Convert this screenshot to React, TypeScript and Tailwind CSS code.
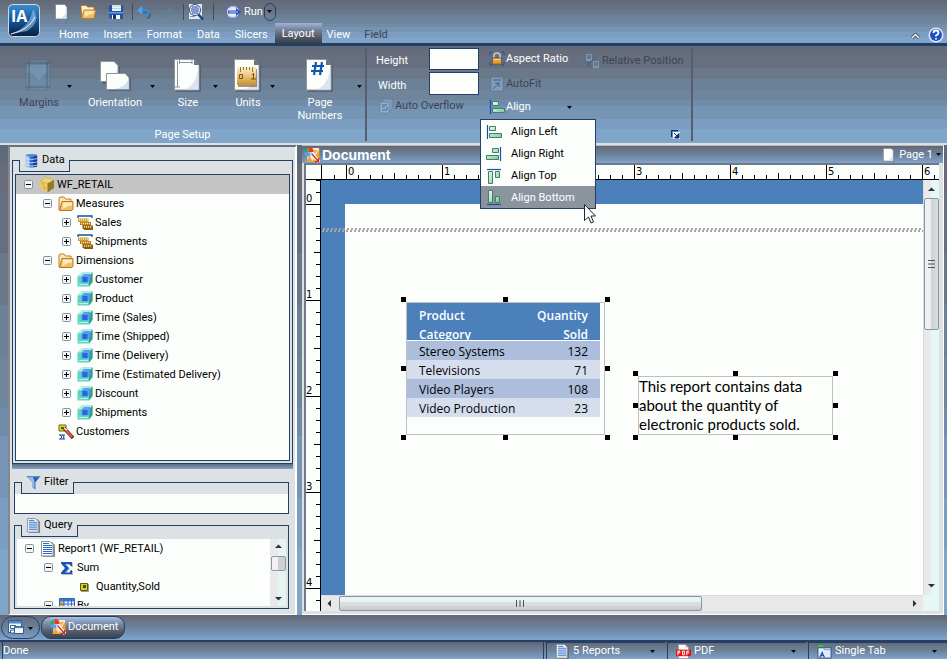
import type { ReactNode } from "react";

const BANDS =
  "bg-[linear-gradient(to_bottom,#5f6a7a_0_4%,#676b7a_4%_10%,#666f80_10%_23%,#6a788a_23%_34%,#6b8197_34%_45%,#6e859b_45%_56%,#718bab_56%_62%,#7694b3_62%_75%,#7a9dc1_75%_86%,#80a5c9_86%)]";
const SLIM = "bg-[linear-gradient(to_bottom,#5f6676,#6a7384_20%,#6b8299_50%,#7492b5_75%,#80a5c9)]";

type IconProps = { name: string; size?: number; className?: string };

const Sheet = ({ fold = true }: { fold?: boolean }) => (
  <g>
    <path d="M3 1h8l3 3v12H3z" fill="#555b66" opacity=".55" />
    <path d="M1.500 0.500h9l2.500 2.500v12H1.500z" fill="#fdfefd" stroke="#8b9199" />
    {fold && <path d="M12.500 5v9.500H6q6-2 6.500-9.500z" fill="#cfe0f4" />}
  </g>
);

const Bars = () => (
  <linearGradient id="mint" x1="0" y1="0" x2="1" y2="1">
    <stop offset="0" stopColor="#e4fbe6" />
    <stop offset="1" stopColor="#7fca98" />
  </linearGradient>
);

const glyphs: Record<string, ReactNode> = {
  page: <Sheet />,
  open: (
    <g stroke="#b5741c" strokeWidth=".8">
      <path d="M1 2.500q0-1 1-1h4l1.500 1.500H14v10H2z" fill="#fff0c8" />
      <path d="M1.500 14.500 4 6h12l-2 8.500z" fill="#f3bb5f" />
      <path d="M4.500 7h9.500l-1 3q-4 0-8 3z" fill="#fde3a6" stroke="none" />
    </g>
  ),
  folder: (
    <g stroke="#b4701d" strokeWidth=".9">
      <path d="M1 14V2l1-1h4l1.500 2H13v11z" fill="#fce5b4" />
      <path d="M1.500 14.500 4 5.500h11V13l-1 1.500z" fill="#f2bd68" />
      <path d="M5 6.500h9v3q-5 0-9.500 4z" fill="#fdeab9" stroke="none" />
    </g>
  ),
  save: (
    <g>
      <path d="M1 1h14v14H3l-2-2z" fill="#2454a8" />
      <path d="M4 1h9v6H4z" fill="#eaf3fd" />
      <path d="M4 2h9M4 4.500h9" stroke="#bcd2ee" />
      <path d="M1 8h14v1.500H1z" fill="#5ea0e6" />
      <path d="M4 11h8v4H4z" fill="#f5f7f9" />
      <path d="M5 11h3v4H5z" fill="#16336b" />
    </g>
  ),
  undo: (
    <g fill="none">
      <path d="M6 6.500h4q4 0 3 6l-2 2" stroke="#33425c" strokeWidth="2.500" transform="translate(1 1)" opacity=".6" />
      <path d="M5 6h5q4 0 3 4.500-.5 2-3 3" stroke="#2f8fdc" strokeWidth="2.600" />
      <path d="M0 6 6 1v10z" fill="#4aa6ea" />
    </g>
  ),
  redo: (
    <g fill="none" opacity=".75">
      <path d="M10 6.500H6Q2 6.500 3 11q.5 2 3 3" stroke="#5c8794" strokeWidth="2.400" />
      <path d="m15.500 6.500-6-5v10z" fill="#5c8794" />
    </g>
  ),
  preview: (
    <g>
      <path d="M1 0h13v15H1z" fill="#dfe7f0" />
      <path d="m10 10 5 5.500" stroke="#1d3f8f" strokeWidth="2.500" />
      <circle cx="7" cy="6" r="5.500" fill="#eef6ff" stroke="#31507c" />
      <path d="M4 3h6M3 5h8M3 7h8M4 9h6" stroke="#1b3f9f" />
      <path d="M2 12.500h5" stroke="#8293ac" />
    </g>
  ),
  run: (
    <g>
      <circle cx="7" cy="8" r="6.500" fill="#e5ecfa" stroke="#566fae" />
      <path d="M3 4q4-3 7.500 0M2 12q5 3 8.500 0" stroke="#9db3e2" strokeWidth="1.200" fill="none" />
      <path d="M2 6.500h8V4l5 4-5 4V9.500H2z" fill="#2b4fc0" />
      <path d="M3 8h9" stroke="#c6d6ff" />
    </g>
  ),
  help: (
    <g>
      <circle cx="8" cy="8" r="7.500" fill="#d9e6fb" />
      <circle cx="8" cy="8" r="6" fill="#1d50c4" />
      <path d="M5.500 6q0-2.500 2.500-2.500T10.500 6Q10.500 7.200 8 8.500v1M8 11v1.500" stroke="#fff" strokeWidth="1.800" fill="none" />
    </g>
  ),
  lock: (
    <g>
      <path d="M1 4V1h3M12 1h3v3M15 11v3h-3M4 14H1v-3" stroke="#1a50b0" fill="none" />
      <path d="M5 7V4.500q0-2.500 3-2.500t3 2.500V7" stroke="#c3c7cd" strokeWidth="1.600" fill="none" />
      <path d="M3.500 7h9v6h-9z" fill="#e59f34" stroke="#6b4a1c" strokeWidth=".7" />
      <path d="M4.500 8.500h7" stroke="#fbd98d" />
    </g>
  ),
  fit: (
    <g opacity=".6">
      <path d="M2 1h12v14H2z" fill="#90b0d2" stroke="#4a6f99" strokeWidth=".7" />
      <path d="M4 4h8M4 13l6-6M6 7h4v4" stroke="#1d427a" fill="none" />
    </g>
  ),
  overflow: (
    <g opacity=".6">
      <path d="M5 1h9v11H5z" fill="#8cabcc" stroke="#57789c" strokeWidth=".7" />
      <path d="M2 4h9v11H2z" fill="#a9c2dc" stroke="#57789c" strokeWidth=".7" />
      <path d="M4 7h5M4 9h3M4 12h5M9 9v3" stroke="#2b4d80" fill="none" />
    </g>
  ),
  relative: (
    <g opacity=".6">
      <path d="M1 1h6v7H1zM8 8h6v7H8z" fill="#8fb0d3" />
      <path d="M2 3h4M2 5h4M9 10h4M9 12h4M3 12l8-9M3 9v4h3" stroke="#33557f" fill="none" />
    </g>
  ),
  alignLeft: (
    <g>
      <Bars />
      <path d="M1.500 1v14" stroke="#0b51b5" strokeWidth="1.200" />
      <path d="M3.500 2.500h6v4h-6zM3.500 9.500h12v4h-12z" fill="url(#mint)" stroke="#3f8069" />
    </g>
  ),
  alignRight: (
    <g>
      <path d="M14.500 1v14" stroke="#0b51b5" strokeWidth="1.200" />
      <path d="M6.500 2.500h6v4h-6zM.5 9.500h12v4H.5z" fill="url(#mint)" stroke="#3f8069" />
    </g>
  ),
  alignTop: (
    <g>
      <path d="M1 1.500h14" stroke="#0b51b5" strokeWidth="1.200" />
      <path d="M2.500 3.500h4v12h-4zM9.500 3.500h4v6h-4z" fill="url(#mint)" stroke="#3f8069" />
    </g>
  ),
  alignBottom: (
    <g>
      <path d="M1 14.500h14" stroke="#0b51b5" strokeWidth="1.200" />
      <path d="M2.500.5h4v12h-4zM9.500 6.500h4v6h-4z" fill="url(#mint)" stroke="#3f8069" />
    </g>
  ),
  database: (
    <g>
      <path d="M2 2.500h12v12q-6 2-12 0z" fill="#2e6ad0" />
      <path d="M2 2.500h4v12.500l-4-.5z" fill="#a9cbf6" />
      <path d="M10 3h4v11.500l-4 .8z" fill="#12358c" />
      <path d="M2 6q6 2 12 0M2 9.500q6 2 12 0M2 13q6 2 12 0" stroke="#cfe2fb" strokeWidth=".9" fill="none" />
      <ellipse cx="8" cy="2.500" rx="6" ry="1.500" fill="#4f88df" />
    </g>
  ),
  box: (
    <g>
      <path d="m1 4 6-3.500L15 3v8l-6.500 4.500L1 12z" fill="#f1c465" />
      <path d="m1 4 6-3.500L15 3 8.500 6.500z" fill="#ecd66d" stroke="#c2a84c" strokeWidth=".5" />
      <path d="M8.500 6.500 15 3v8l-6.500 4.500z" fill="#8e7b2d" />
      <path d="M4 5v3M5.500 9.500v3" stroke="#c69a45" />
    </g>
  ),
  measure: (
    <g>
      <path d="M1 3V1h14v2" stroke="#0d55a5" strokeWidth="1.300" fill="none" />
      <path d="M1 3.500h10.500v4.500H3v-1H1z" fill="#d39a33" />
      <path d="M3 7h11v4H5.500v-1H3z" fill="#b57819" />
      <path d="M5.500 10.500H16v4.500H7v-1H5.500z" fill="#8c5a15" />
      <path d="M2 5h9M4 8.500h9M7 12h8" stroke="#fbe3a0" strokeWidth="1.400" strokeDasharray="1.200 .8" />
    </g>
  ),
  cube: (
    <g>
      <path d="M.5 4.500 5 .5h10.500V10L12 14.500H.5z" fill="#5fd3c4" />
      <path d="M.5 4.500 5 .5h10.500L12 4.500z" fill="#a6f0e6" />
      <path d="M12 4.500 15.500.5V10L12 14.500z" fill="#2f9e93" />
      <path d="M4.500 4.500 7 2h6v6l-2.500 2.500h-6z" fill="#5c9cf0" />
      <path d="M5.500 5h5v5h-5z" fill="#2269d6" />
      <path d="M2 12.500h9" stroke="#b9f4ec" />
    </g>
  ),
  wizard: (
    <g>
      <path d="M1 1h7v6H1z" fill="#e5dc1e" stroke="#6e6a12" />
      <path d="M3 3h3v2H3z" fill="#55520f" />
      <path d="m6 4 9 10" stroke="#5a2a22" strokeWidth="3.400" />
      <path d="m7 5 7 8" stroke="#e85b44" strokeWidth="2" />
      <path d="m6 4 3 2" stroke="#fff" strokeWidth="1.500" />
      <path d="M1 11h6M1 15h6M2 11l2 2-2 2M5 11l1 2-1 2" stroke="#1b3fa3" fill="none" />
    </g>
  ),
  filter: (
    <g>
      <path d="M.5 1h15L10 8v7.500L7 13V8z" fill="#2d5fb4" />
      <path d="M1 1h6L9 7v7l-2-1.500V8z" fill="#9dbdea" />
      <path d="M.5 1h15l-1.500 1.500H2z" fill="#5e88cc" />
    </g>
  ),
  report: (
    <g>
      <path d="M3 1h9l3 3v12H3z" fill="#59606c" opacity=".7" />
      <path d="M1.500.5H10L13 3.500V15H1.500z" fill="#fbfdff" stroke="#8a929c" />
      <path d="M3 2.500h6M3 4.500h9M3 6.500h9M3 8.500h9M3 10.500h9M3 12.500h9" stroke="#2a6cc9" />
    </g>
  ),
  sigma: (
    <g>
      <path d="M3 3h11v4h-1.500l-1-2H7l4 4-4 4.500h4.500l1.500-2.500H14V15H3v-1.500L7 9 3 4.500z" fill="#6d7f99" opacity=".5" />
      <path d="M2 2h11v4h-1.500l-1-2H6l4 4-4 4.500h4.500l1.500-2.500H13V14H2v-1.500L6 8 2 3.500z" fill="#1555b8" />
    </g>
  ),
  field: (
    <g>
      <path d="M2.500 4.500h7v7h-7z" fill="#d8cf22" stroke="#5f5a16" />
      <path d="M5 6h3v3H5z" fill="#4c4a18" />
      <path d="M10.500 5v7.500H3" stroke="#9a9a90" fill="none" />
    </g>
  ),
  by: (
    <g>
      <path d="M.5.5h15v14H.5z" fill="#eef4fd" stroke="#2a62b8" />
      <path d="M1 1h4v13H1z" fill="#f0b13c" />
      <path d="M1 1h14v2.500H1z" fill="#3f7fd6" />
      <path d="M5 1v13M9 1v13M12.500 1v13M1 6h14M1 9h14M1 12h14" stroke="#2a62b8" strokeWidth=".9" />
    </g>
  ),
  chart: (
    <g>
      <path d="M4 1h11v14H3z" fill="#f6ead2" />
      <path d="M15.500 2v13H8z" fill="#ee9f33" />
      <path d="M9 3h5l-3 4z" fill="#f3b04a" />
      <path d="M0 5.500A4.500 4.500 0 0 1 4.500 1v4.500z" fill="#32a86a" />
      <path d="M4.500 0A4.500 4.500 0 0 1 9.500 5h-5z" fill="#e23a2c" />
      <path d="M0 5.500h9a4.500 4 0 0 1-9 0z" fill="#5f9be8" />
      <path d="m2 15 3.500-6L9 15z" fill="#f0a336" />
      <path d="m7 6 8 9" stroke="#fff" strokeWidth="3.400" />
      <path d="m7.500 6.500 7 8M14.500 11v3.500H11" stroke="#cf2a1e" strokeWidth="1.300" fill="none" />
    </g>
  ),
  windows: (
    <g strokeWidth=".9">
      <path d="M.5.5h13v12H.5z" fill="#eef3f8" stroke="#27508a" />
      <path d="M1 1h12.500v2.500H1z" fill="#4f87cc" />
      <path d="M2.500 5.500h5v3h-5zM2.500 10h4v3h-4z" fill="#fff" stroke="#27508a" />
      <path d="M6.500 6.500h9v7h-9z" fill="#f8fafc" stroke="#27508a" />
      <path d="M7 7.500h8" stroke="#4f87cc" strokeWidth="1.400" />
    </g>
  ),
  pdf: (
    <g>
      <path d="M2.500.5H10L13.500 4v11.500h-11z" fill="#fafafa" stroke="#989898" />
      <path d="M10 .5V4h3.500z" fill="#c9c9c9" />
      <path d="M0 6h16v7H0z" fill="#e01616" />
      <path d="M2 12V7.500h2v2H2M7 7.500h2v4H7zM11.500 12V7.500h2.500M11.500 9.500H14" stroke="#fff" fill="none" />
    </g>
  ),
  tab: (
    <g>
      <path d="M1 1h6v3H1z" fill="#37c43c" />
      <path d="M1 4h14v11H1z" fill="#e3ecf6" stroke="#2c4f85" />
      <path d="M7.500 4v2H15" stroke="#7f98bb" fill="none" />
      <path d="M3 14.500 5.500 9 8 14.500M4 12.500h3" stroke="#1d50b8" strokeWidth="1.300" fill="none" />
    </g>
  ),
};

const Icon = ({ name, size = 16, className = "" }: IconProps) => (
  <svg width={size} height={size} viewBox="0 0 16 16" className={`shrink-0 ${className}`} aria-hidden="true">
    {glyphs[name]}
  </svg>
);

const Caret = ({ className = "" }: { className?: string }) => (
  <svg width="5" height="3" viewBox="0 0 5 3" className={`shrink-0 ${className}`} aria-hidden="true">
    <path d="M0 0h5L2.500 3z" fill="#05080d" />
  </svg>
);

const BigSheet = ({ children }: { children?: ReactNode }) => (
  <g>
    <path d="M4 2h20l5 5v26H4z" fill="#4a505c" opacity=".6" />
    <path d="M2.500.5H22L27 6v25H2.500z" fill="#fcfefc" stroke="#8e959d" />
    <path d="M22 .5V6h5z" fill="#6c7178" />
    <path d="M26.500 8v22.500H12Q24 27 26.500 8z" fill="#cfdff3" opacity=".8" />
    {children}
  </g>
);

const bigGlyphs: Record<string, ReactNode> = {
  Margins: (
    <g opacity=".45">
      <path d="M3 1h20l4 4v26H3z" fill="#6f97b8" stroke="#4f6f8c" />
      <path d="M4 6h20v8q-6 2-8 8l-6-8H4z" fill="#7fb4e0" />
      <path d="M6 1v30M3 4h24M3 28h24M24 3v27" stroke="#33445a" fill="none" />
    </g>
  ),
  Orientation: (
    <g>
      <path d="M3 4h14l4 4v17H3z" fill="#4a505c" opacity=".6" />
      <path d="M1.500 2.500H15l4 4V22.500H1.500z" fill="#fcfefc" stroke="#8e959d" />
      <path d="M18.500 8v14H9q8-4 9.500-14z" fill="#cfdff3" />
      <path d="M9 16h20l3 3v13H9z" fill="#4a505c" opacity=".6" />
      <path d="M7.500 14.500H26l4 4V30.500H7.500z" fill="#fcfefc" stroke="#8e959d" />
      <path d="M29.500 20v10H15q12-2 14.500-10z" fill="#cfdff3" />
    </g>
  ),
  Size: (
    <BigSheet>
      <path d="M5.500 2v26M3 28h5M7 3.500h13M7.500 1v4M20 1v4" stroke="#8d939b" fill="none" />
    </BigSheet>
  ),
  Units: (
    <BigSheet>
      <linearGradient id="brass" x1="0" y1="0" x2="0" y2="1">
        <stop offset="0" stopColor="#fbf0d3" />
        <stop offset=".45" stopColor="#ecca84" />
        <stop offset="1" stopColor="#c98f2c" />
      </linearGradient>
      <path d="M6 10h19v18H6z" fill="#6b5120" opacity=".6" />
      <path d="M5 8h19v18H5z" fill="url(#brass)" />
      <path d="M8.500 8v5M11.500 8v3M14.500 8v3M17.500 8v3M20.500 8v5" stroke="#a07a35" />
      <path d="M7.500 15.500h3v4h-3zM21.500 14v6M19 20h5M20 15.500h2" stroke="#7d4f14" fill="none" />
    </BigSheet>
  ),
  Numbers: (
    <BigSheet>
      <path d="M12 3 10 16M18 3l-2 13M8 7h12M7 12h12" stroke="#1157b0" strokeWidth="2.200" fill="none" />
    </BigSheet>
  ),
};

function BigButton({ icon, label, col, dim = false }: { icon: string; label: string; col: string; dim?: boolean }) {
  return (
    <button className={`flex items-start gap-[2px] ${dim ? "text-[#3d4450]" : ""}`} disabled={dim}>
      <span className={`flex flex-col items-center gap-1 whitespace-pre-line leading-[13px] ${col}`}>
        <svg width="32" height="33" viewBox="0 0 32 33" aria-hidden="true">
          {bigGlyphs[icon]}
        </svg>
        {label}
      </span>
      <Caret className="mt-[26px]" />
    </button>
  );
}

function ToolButton({ icon, label, dim = false }: { icon: string; label: string; dim?: boolean }) {
  return (
    <button className={`flex h-4 items-center gap-px whitespace-nowrap ${dim ? "text-[#3d4450]" : ""}`} disabled={dim}>
      <Icon name={icon} />
      {label}
    </button>
  );
}

const menuItems = [
  { icon: "alignLeft", label: "Align Left" },
  { icon: "alignRight", label: "Align Right" },
  { icon: "alignTop", label: "Align Top" },
  { icon: "alignBottom", label: "Align Bottom" },
];

function Header() {
  const tabs = ["Home", "Insert", "Format", "Data", "Slicers", "Layout", "View", "Field"];
  return (
    <header className={`flex h-[46px] shrink-0 border-b-[3px] border-[#243f66] ${BANDS}`}>
      <button aria-label="Application menu" className="ml-2 mt-1 h-8 w-8">
        <svg width="32" height="33" viewBox="0 0 32 33" aria-hidden="true">
          <defs>
            <linearGradient id="app" x1="0" y1="0" x2="0" y2="1">
              <stop offset="0" stopColor="#3c8fd0" />
              <stop offset=".5" stopColor="#14579b" />
              <stop offset="1" stopColor="#0a1d3c" />
            </linearGradient>
          </defs>
          <rect x=".5" y=".5" width="31" height="32" rx="4" fill="url(#app)" stroke="#c9d8e6" />
          <path d="M2 30Q22 24 25 5q9 12-6 22z" fill="#9fc2e2" opacity=".6" />
          <path d="M3 30q18-4 24-17" stroke="#e6f0f9" fill="none" />
          <text x="3" y="18" fontSize="16" fontWeight="700" fill="#fff" fontFamily="Open Sans, sans-serif">IA</text>
        </svg>
      </button>
      <div className="ml-[9px] flex flex-1 flex-col">
        <div className="flex h-6 items-center pl-[5px]">
          <button aria-label="New"><Icon name="page" /></button>
          <button aria-label="Open" className="ml-[10px]"><Icon name="open" /></button>
          <button aria-label="Save" className="ml-[12px]"><Icon name="save" /></button>
          <span className="ml-2 h-4 w-px bg-[#444b5a]" />
          <button aria-label="Undo" className="ml-1"><Icon name="undo" size={14} /></button>
          <button aria-label="Redo" className="ml-[9px]"><Icon name="redo" size={14} /></button>
          <span className="ml-[9px] h-4 w-px bg-[#444b5a]" />
          <button aria-label="Preview" className="ml-1"><Icon name="preview" /></button>
          <span className="ml-[9px] h-4 w-px bg-[#444b5a]" />
          <button className="ml-3 flex items-center gap-[2px]">
            <Icon name="run" />
            Run
          </button>
          <button aria-label="Run options" className="ml-px flex h-[18px] w-3 items-center justify-center rounded-full border border-[#243f66]">
            <Caret />
          </button>
        </div>
        <nav className="flex flex-1 items-end pl-[3px]">
          {tabs.map((tab) => (
            <button
              key={tab}
              className={
                tab === "Layout"
                  ? "h-5 bg-[linear-gradient(to_bottom,#9fb3da,#7b87a0_30%,#545a66_70%,#3a3f48)] px-[7px] pt-[2px]"
                  : tab === "Field"
                    ? "h-4 pl-[7px] text-[#3d4450]"
                    : tab === "View"
                      ? "h-4 pl-[5px] pr-[7px]"
                      : tab === "Slicers"
                        ? "h-4 px-[7px]"
                        : "h-4 pl-[7px] pr-2"
              }
            >
              {tab}
            </button>
          ))}
          <span className="flex-1" />
          <button aria-label="Collapse ribbon" className="mb-1 mr-2">
            <svg width="9" height="6" viewBox="0 0 9 6" aria-hidden="true">
              <path d="m1 5 3.500-3.500L8 5" stroke="#2c3442" strokeWidth="3" fill="none" />
              <path d="m1 5 3.500-3.500L8 5" stroke="#fff" strokeWidth="1.500" fill="none" />
            </svg>
          </button>
          <button aria-label="Help" className="mr-[3px]"><Icon name="help" /></button>
        </nav>
      </div>
    </header>
  );
}

function Ribbon() {
  return (
    <div className={`flex h-[97px] shrink-0 py-[2px] ${BANDS}`}>
      <section className="flex w-[367px] shrink-0 flex-col border-r-2 border-[#585e6f]">
        <div className="flex flex-1 items-start gap-[10px] pl-[13px] pt-[11px]">
          <BigButton icon="Margins" label="Margins" col="w-[52px]" dim />
          <BigButton icon="Orientation" label="Orientation" col="w-[66px]" />
          <BigButton icon="Size" label="Size" col="w-[46px]" />
          <BigButton icon="Units" label="Units" col="w-[40px]" />
          <BigButton icon="Numbers" label={"Page\nNumbers"} col="w-[70px]" />
        </div>
        <h2 className="h-3 text-center leading-3">Page Setup</h2>
      </section>
      <section className="flex w-[326px] shrink-0 border-r-2 border-[#585e6f] pl-[9px]">
        <div className="flex w-[113px] flex-col">
          <label className="flex h-[22px] w-[103px] items-center justify-between">
            <span className="pt-1">Height</span>
            <input className="h-[22px] w-[50px] border border-[#243f66] bg-[#fbfefa] px-1 text-black" />
          </label>
          <label className="mt-[2px] flex h-[23px] w-[103px] items-center justify-between pl-[2px]">
            <span className="pt-1">Width</span>
            <input className="h-[23px] w-[50px] border border-[#243f66] bg-[#fbfefa] px-1 text-black" />
          </label>
          <div className="pl-[2px] pt-[3px]">
            <ToolButton icon="overflow" label="Auto Overflow" dim />
          </div>
        </div>
        <div className="flex w-[96px] flex-col pt-[3px]">
          <ToolButton icon="lock" label="Aspect Ratio" />
          <div className="h-[9px]" />
          <ToolButton icon="fit" label="AutoFit" dim />
          <div className="h-[7px]" />
          <div className="relative z-10 flex w-[83px] items-center justify-between">
            <ToolButton icon="alignLeft" label="Align" />
            <Caret />
            <ul role="menu" className="absolute -left-[9px] top-5 w-[116px] border border-[#243f66] bg-[#fbfefa] text-black">
              {menuItems.map((item, i) => (
                <li key={item.label} role="none">
                  <button
                    role="menuitem"
                    className={`flex h-[22px] w-full items-center gap-[9px] pl-[5px] pt-px ${i === 3 ? "bg-[#8b949d] text-white" : ""}`}
                  >
                    <Icon name={item.icon} />
                    {item.label}
                  </button>
                </li>
              ))}
              <svg width="12" height="20" viewBox="0 0 12 20" className="absolute -bottom-4 left-[103px]" aria-hidden="true">
                <path d="M.5.5v16l4-3.500 2.500 6 2.500-1-2.500-6h4.500z" fill="#fff" stroke="#20242c" />
              </svg>
            </ul>
          </div>
        </div>
        <div className="flex flex-1 flex-col justify-between pt-[5px]">
          <ToolButton icon="relative" label="Relative Position" dim />
          <button aria-label="Layout options" className="mb-[2px] mr-[11px] self-end">
            <svg width="9" height="9" viewBox="0 0 9 9" aria-hidden="true">
              <path d="M.5 7V.5H7" stroke="#0d2f74" fill="none" strokeWidth="1.500" />
              <path d="M2 2h7v7H2z" fill="#f4f8fc" />
              <path d="m3 3 4 4M8 3.500V8H3.500z" stroke="#0d2f74" fill="#0d2f74" />
            </svg>
          </button>
        </div>
      </section>
    </div>
  );
}

type Node = { level: number; icon: string; label: string; state?: "+" | "-"; selected?: boolean };

const dataTree: Node[] = [
  { level: 0, icon: "box", label: "WF_RETAIL", state: "-", selected: true },
  { level: 1, icon: "folder", label: "Measures", state: "-" },
  { level: 2, icon: "measure", label: "Sales", state: "+" },
  { level: 2, icon: "measure", label: "Shipments", state: "+" },
  { level: 1, icon: "folder", label: "Dimensions", state: "-" },
  { level: 2, icon: "cube", label: "Customer", state: "+" },
  { level: 2, icon: "cube", label: "Product", state: "+" },
  { level: 2, icon: "cube", label: "Time (Sales)", state: "+" },
  { level: 2, icon: "cube", label: "Time (Shipped)", state: "+" },
  { level: 2, icon: "cube", label: "Time (Delivery)", state: "+" },
  { level: 2, icon: "cube", label: "Time (Estimated Delivery)", state: "+" },
  { level: 2, icon: "cube", label: "Discount", state: "+" },
  { level: 2, icon: "cube", label: "Shipments", state: "+" },
  { level: 1, icon: "wizard", label: "Customers" },
];

const queryTree: Node[] = [
  { level: 0, icon: "report", label: "Report1 (WF_RETAIL)", state: "-" },
  { level: 1, icon: "sigma", label: "Sum", state: "-" },
  { level: 2, icon: "field", label: "Quantity,Sold" },
  { level: 1, icon: "by", label: "By", state: "-" },
];

const indents = ["pl-2", "pl-[27px]", "pl-[46px]"];

function Tree({ nodes, label }: { nodes: Node[]; label: string }) {
  return (
    <ul role="tree" aria-label={label}>
      {nodes.map((node, i) => (
        <li
          key={i}
          role="treeitem"
          aria-level={node.level + 1}
          aria-selected={!!node.selected}
          className={`flex h-[19px] items-center whitespace-nowrap ${indents[node.level]} ${node.selected ? "bg-[#c5c5c5]" : ""}`}
        >
          {node.state ? (
            <button aria-label={node.state === "+" ? "Expand" : "Collapse"} className="mr-[6px] h-[9px] w-[9px]">
              <svg width="9" height="9" viewBox="0 0 9 9" aria-hidden="true">
                <rect x=".5" y=".5" width="8" height="8" rx="1" fill="#f4f5f3" stroke="#7d93ad" />
                <path d={node.state === "+" ? "M2 4.500h5M4.500 2v5" : "M2 4.500h5"} stroke="#000" />
              </svg>
            </button>
          ) : (
            <span className="w-[15px]" />
          )}
          <Icon name={node.icon} className="mr-[2px]" />
          {node.label}
        </li>
      ))}
    </ul>
  );
}

function GroupBox({ icon, title, className, children }: { icon: string; title: string; className: string; children: ReactNode }) {
  return (
    <section className={`flex flex-col ${className}`}>
      <div className="flex h-[23px] shrink-0 items-end">
        <div className="h-3 w-[7px] border-l border-t border-[#243f66]" />
        <div className="h-3 w-px bg-[#243f66]" />
        <h2 className="flex h-full items-center gap-[3px] border-b border-[#243f66] px-1">
          <Icon name={icon} size={15} />
          {title}
        </h2>
        <div className="h-3 w-px bg-[#243f66]" />
        <div className="h-3 flex-1 border-r border-t border-[#243f66]" />
      </div>
      <div className="flex min-h-0 flex-1 flex-col border-x border-b border-[#243f66]">{children}</div>
    </section>
  );
}

function Arrow({ d }: { d: string }) {
  return (
    <svg width="7" height="7" viewBox="0 0 7 7" className="shrink-0" aria-hidden="true">
      <path d={d} fill="#2b3238" />
    </svg>
  );
}

function Sidebar() {
  return (
    <aside className="ml-2 flex w-[289px] shrink-0 flex-col border-b border-l-2 border-r-2 border-t-2 border-b-white border-l-[#85878f] border-r-white border-t-[#6b7080] bg-[#dce1e4] pt-[2px]">
      <GroupBox icon="database" title="Data" className="ml-[2px] mr-[2px] h-[315px] shrink-0">
        <div className="m-[2px] flex-1 border border-[#243f66] bg-[#fbfefa]">
          <Tree nodes={dataTree} label="Data" />
        </div>
      </GroupBox>
      <div className="mx-[2px] h-[5px] shrink-0 bg-[linear-gradient(to_bottom,#5f6a7a,#80a5c9)]" />
      <GroupBox icon="filter" title="Filter" className="ml-1 mr-[6px] mt-[2px] h-[43px] shrink-0">
        <div className="flex-1 bg-[#fbfefa]" />
      </GroupBox>
      <GroupBox icon="report" title="Query" className="mb-[5px] ml-1 mr-[6px] min-h-0 flex-1">
        <div className="m-[2px] flex min-h-0 flex-1 overflow-hidden bg-[#fbfefa]">
          <div className="min-w-0 flex-1 overflow-hidden">
            <Tree nodes={queryTree} label="Query" />
          </div>
          <div className="flex w-4 flex-col items-center justify-between bg-[linear-gradient(to_right,#e9e9e9_50%,#e6f5f1_50%)] py-1">
            <div className="flex w-full flex-col items-center gap-[6px]">
              <Arrow d="M0 5h7L3.500 1.500z" />
              <div className="h-[15px] w-[15px] rounded-[2px] border border-[#8f98a3] bg-[linear-gradient(to_right,#f2f2f2_50%,#cfd0d2_50%)]" />
            </div>
            <Arrow d="M0 2h7L3.500 5.500z" />
          </div>
        </div>
      </GroupBox>
    </aside>
  );
}

const eighths = [0, 1, 2, 3, 4, 5, 6, 7];

function TopRuler() {
  return (
    <div className="flex h-[15px] shrink-0 overflow-hidden border-b border-black bg-[#fbfefa] text-black">
      <div className="w-[15px] shrink-0" />
      <div className="flex w-[25px] shrink-0 items-end border-l border-black">
        <span className="ml-[12px] h-1 w-3 border-l border-black" />
      </div>
      {[0, 1, 2, 3, 4, 5, 6, 7, 8, 9, 10, 11, 12].map((inch) => (
        <div key={inch} className="flex w-[96px] shrink-0 items-end">
          {eighths.map((e) =>
            e === 0 ? (
              <span key={e} className="h-full w-3 border-l border-black pl-px font-['DejaVu_Sans',sans-serif] text-[10px] leading-[13px]">
                {inch < 7 && inch !== 2 ? inch : null}
              </span>
            ) : (
              <span key={e} className={`w-3 border-l border-black ${e === 4 ? "h-[6px]" : "h-1"}`} />
            ),
          )}
        </div>
      ))}
    </div>
  );
}

function SideRuler() {
  return (
    <div className="flex w-[15px] shrink-0 flex-col overflow-hidden border-r border-black bg-[#fbfefa] text-black">
      <div className="flex h-[24px] shrink-0 flex-col items-end">
        <span className="h-3 w-1 border-t border-black" />
        <span className="h-3 w-1 border-t border-black" />
      </div>
      {[0, 1, 2, 3, 4, 5, 6, 7, 8].map((inch) => (
        <div key={inch} className="flex h-[96px] shrink-0 flex-col items-end">
          {eighths.map((e) =>
            e === 0 ? (
              <span key={e} className="h-3 w-full border-t border-black">
                <span className="-mt-[12px] block font-['DejaVu_Sans',sans-serif] text-[10px] leading-[12px]">{inch < 5 ? inch : null}</span>
              </span>
            ) : (
              <span key={e} className={`h-3 border-t border-black ${e === 4 ? "w-[6px]" : "w-1"}`} />
            ),
          )}
        </div>
      ))}
    </div>
  );
}

function Selection({ className, children }: { className: string; children: ReactNode }) {
  const handles = [
    "-left-[6px] -top-[6px]",
    "-top-[6px] left-[calc(50%-3px)]",
    "-right-[6px] -top-[6px]",
    "-left-[6px] top-[calc(50%-3px)]",
    "-right-[6px] top-[calc(50%-3px)]",
    "-bottom-[6px] -left-[6px]",
    "-bottom-[6px] left-[calc(50%-3px)]",
    "-bottom-[6px] -right-[6px]",
  ];
  return (
    <div className={`absolute border border-[#c0c0c0] ${className}`}>
      {children}
      {handles.map((h) => (
        <span key={h} className={`absolute h-[5px] w-[5px] bg-black ${h}`} />
      ))}
    </div>
  );
}

const rows = [
  ["Stereo Systems", "132"],
  ["Televisions", "71"],
  ["Video Players", "108"],
  ["Video Production", "23"],
];

function Canvas() {
  return (
    <div className="relative min-w-0 flex-1 overflow-hidden bg-[#4b80bb] pl-6 pt-6">
      <div className="h-full bg-[#fbfefa]" />
      <svg className="absolute left-0 top-12 h-1 w-full" aria-hidden="true">
        <pattern id="hatch" width="4" height="4" patternUnits="userSpaceOnUse">
          <path d="M2 0h2v2H2zM1 2h2v2H1z" fill="#a3a4a3" />
        </pattern>
        <rect width="100%" height="4" fill="url(#hatch)" />
      </svg>
      <Selection className="left-[85px] top-[122px] h-[133px] w-[199px]">
        <table className="w-[193px] border-collapse font-['Open_Sans',sans-serif] text-[12px] leading-[19px] text-black">
          <thead>
            <tr className="h-[37px] bg-[#4b80bb] align-top text-white">
              <th className="p-0 pl-3 text-left font-semibold">
                <div className="h-[37px] overflow-hidden pt-[3px]">Product<br />Category</div>
              </th>
              <th className="p-0 pr-3 text-right font-semibold">
                <div className="h-[37px] overflow-hidden pt-[3px]">Quantity<br />Sold</div>
              </th>
            </tr>
          </thead>
          <tbody className="leading-[15px]">
            {rows.map(([name, qty], i) => (
              <tr key={name} className={`h-[19px] ${i === 0 ? "border-t border-white" : ""} ${i % 2 ? "bg-[#d6deed]" : "bg-[#adbddc]"}`}>
                <td className="p-0 pl-3 pt-[3px]">{name}</td>
                <td className="p-0 pr-3 pt-[3px] text-right">{qty}</td>
              </tr>
            ))}
          </tbody>
        </table>
      </Selection>
      <Selection className="left-[317px] top-[196px] h-[59px] w-[195px]">
        <p className="font-['Lato',sans-serif] text-[15px] leading-[19px] text-black">
          This report contains data about the quantity of electronic products sold.
        </p>
      </Selection>
    </div>
  );
}

function DocumentPane() {
  return (
    <main className="ml-[5px] mr-[3px] flex min-w-0 flex-1 flex-col border-b border-r border-t border-white border-t-[#b9bcc0] bg-[#dce1e4]">
      <div className={`flex h-[17px] shrink-0 items-center ${SLIM}`}>
        <Icon name="chart" className="ml-[2px]" />
        <h1 className="ml-[2px] flex-1 font-['Liberation_Sans',Arial,sans-serif] text-[14px] font-bold">Document</h1>
        <button className="flex items-center gap-[3px]">
          <Icon name="page" size={14} />
          Page 1
          <Caret className="mr-[2px]" />
        </button>
      </div>
      <div className="mb-[3px] ml-[2px] mr-1 flex min-h-0 flex-1 flex-col border-l-2 border-t-2 border-[#737888]">
        <TopRuler />
        <div className="flex min-h-0 flex-1">
          <SideRuler />
          <div className="flex min-w-0 flex-1 flex-col">
            <div className="flex min-h-0 flex-1">
              <Canvas />
              <div className="flex w-4 shrink-0 flex-col items-center justify-between border-l border-[#d7dcdf] bg-[linear-gradient(to_right,#e9e9e9_50%,#e6f8f4_50%)] py-[6px]">
                <div className="flex w-full flex-col items-center gap-[5px]">
                  <Arrow d="M0 5h7L3.500 1.500z" />
                  <div className="flex h-[132px] w-[15px] items-center justify-center rounded-[2px] border border-[#8b94a0] bg-[linear-gradient(to_right,#f0f0f1_45%,#cfd0d4_45%,#dcdde0)]">
                    <svg width="7" height="8" viewBox="0 0 7 8" aria-hidden="true">
                      <path d="M0 .5h7M0 4h7M0 7.500h7" stroke="#4e555c" />
                    </svg>
                  </div>
                </div>
                <Arrow d="M0 2h7L3.500 5.500z" />
              </div>
            </div>
            <div className="flex h-4 shrink-0">
              <div className="flex flex-1 items-center justify-between border-t border-[#d7dcdf] bg-[#e8e8e8] pl-[5px] pr-[5px]">
                <div className="flex flex-1 items-center gap-[6px]">
                  <Arrow d="M5 0v7L1.500 3.500z" />
                  <div className="flex h-[15px] w-[62%] items-center justify-center rounded-[2px] border border-[#8b94a0] bg-[linear-gradient(to_bottom,#e6f5f1_35%,#dcdde0_35%_60%,#c5c7ca)]">
                    <svg width="8" height="7" viewBox="0 0 8 7" aria-hidden="true">
                      <path d="M.5 0v7M4 0v7M7.500 0v7" stroke="#4e555c" />
                    </svg>
                  </div>
                </div>
                <Arrow d="M2 0v7l3.500-3.500z" />
              </div>
              <div className="w-4 bg-[#e6f8f4]" />
            </div>
          </div>
        </div>
      </div>
    </main>
  );
}

function StatusCell({ icon, label, width }: { icon: string; label: string; width: string }) {
  return (
    <button className={`flex items-center gap-[3px] border-l border-t border-[#243f66] pl-2 pr-[10px] ${width}`}>
      <Icon name={icon} size={15} />
      <span className="flex-1 text-left">{label}</span>
      <Caret />
    </button>
  );
}

export default function App() {
  return (
    <div className="flex h-screen flex-col overflow-hidden bg-[#dce1e4] font-['Roboto','Noto_Sans',sans-serif] text-[11px] leading-[14px] text-white">
      <Header />
      <Ribbon />
      <div className={`mt-[2px] flex min-h-0 flex-1 ${BANDS}`}>
        <div className="flex min-w-0 flex-1 text-black">
          <Sidebar />
          <div className="flex min-w-0 flex-1 text-white">
            <DocumentPane />
          </div>
        </div>
      </div>
      <div className={`flex h-[25px] shrink-0 items-center pl-px ${SLIM}`}>
        <button aria-label="Windows" className="flex h-[23px] w-[39px] items-center justify-center gap-1 rounded-full border border-[#243f66] pt-px">
          <Icon name="windows" />
          <Caret />
        </button>
        <button className="ml-px flex h-[23px] items-center gap-[2px] rounded-[10px] border border-[#243f66] bg-[linear-gradient(to_bottom,#a9c0e0,#7d8fab_30%,#535b69_70%,#3c424d)] pb-[2px] pl-2 pr-[6px]">
          <Icon name="chart" />
          Document
        </button>
      </div>
      <footer className={`flex h-[19px] shrink-0 gap-[2px] border-t-2 border-[#243f66] ${SLIM}`}>
        <div className="ml-[2px] flex flex-1 items-center border-l border-r border-[#243f66]">Done</div>
        <StatusCell icon="report" label="5 Reports" width="w-[119px]" />
        <StatusCell icon="pdf" label="PDF" width="w-[139px]" />
        <StatusCell icon="tab" label="Single Tab" width="w-[139px]" />
      </footer>
    </div>
  );
}
